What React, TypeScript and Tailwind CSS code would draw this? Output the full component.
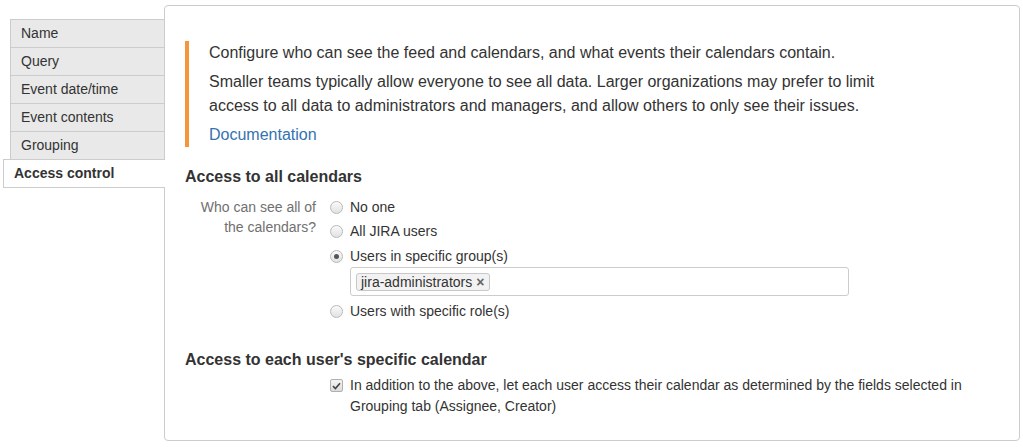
import React from "react";

const tabs = ["Name", "Query", "Event date/time", "Event contents", "Grouping"];

function Radio({ checked }: { checked?: boolean }) {
  return (
    <span className="flex h-[13px] w-[13px] shrink-0 items-center justify-center rounded-full border border-[#b9b9b9] bg-gradient-to-b from-[#fafafa] to-[#e2e2e2]">
      {checked && <span className="h-[5px] w-[5px] rounded-full bg-[#555]" />}
    </span>
  );
}

function Checkbox() {
  return (
    <span className="flex h-[13px] w-[13px] shrink-0 items-center justify-center rounded-[2px] border border-[#b0b0b0] bg-gradient-to-b from-[#f4f4f4] to-[#dcdcdc]">
      <svg width="9" height="8" viewBox="0 0 9 8">
        <path d="M1 4.2 L3.4 6.5 L8 1.2" fill="none" stroke="#444" strokeWidth="1.6" />
      </svg>
    </span>
  );
}

export default function App() {
  return (
    <div
      className="flex w-[1023px] h-[448px] bg-white text-[#333]"
      style={{ fontFamily: '"Liberation Sans", Arial, sans-serif' }}
    >
      <div className="ml-[10px] mt-[19px] w-[154px] shrink-0 text-[14px]">
        {tabs.map((t) => (
          <div
            key={t}
            className="h-[28px] border-l border-t border-[#ccc] bg-[#e9e9e9] pl-[10px] leading-[27px]"
          >
            {t}
          </div>
        ))}
        <div className="relative z-10 -ml-[7px] -mr-px h-[29px] border-y border-l border-[#ccc] bg-white pl-[10px] font-bold leading-[27px]">
          Access control
        </div>
      </div>
      <div className="mt-[5px] mb-[7px] w-[856px] shrink-0 rounded-[4px] border border-[#ccc] bg-white px-[20px] pt-[35px]">
        <div className="border-l-4 border-[#f6963c] pl-[20px] text-[16px] leading-[24px]">
          <p>Configure who can see the feed and calendars, and what events their calendars contain.</p>
          <p className="mt-[5px]">
            Smaller teams typically allow everyone to see all data. Larger organizations may prefer to limit
            <br />
            access to all data to administrators and managers, and allow others to only see their issues.
          </p>
          <p className="mt-[5px] text-[#3572b0]">Documentation</p>
        </div>

        <h3 className="mt-[18px] text-[16px] font-bold leading-[24px]">Access to all calendars</h3>
        <div className="mt-[8px] flex text-[14px]">
          <div className="w-[131px] shrink-0 text-right leading-[20px] text-[#707070]">
            Who can see all of
            <br />
            the calendars?
          </div>
          <div className="ml-[14px] flex flex-1 flex-col">
            <label className="flex h-[20px] items-center gap-[7px]">
              <Radio />
              <span>No one</span>
            </label>
            <label className="mt-[4.5px] flex h-[20px] items-center gap-[7px]">
              <Radio />
              <span>All JIRA users</span>
            </label>
            <label className="mt-[4.5px] flex h-[20px] items-center gap-[7px]">
              <Radio checked />
              <span>Users in specific group(s)</span>
            </label>
            <div className="ml-[20px] mt-px flex h-[29px] w-[499px] items-center rounded-[3px] border border-[#ccc] px-[5px]">
              <span className="flex h-[18px] items-center gap-[4px] rounded-[3px] border border-[#c8c8c8] bg-[#f2f2f2] pl-[4px] pr-[5px] leading-[16px]">
                jira-administrators
                <span className="text-[14px] font-bold text-[#666]">×</span>
              </span>
            </div>
            <label className="mt-[5px] flex h-[20px] items-center gap-[7px]">
              <Radio />
              <span>Users with specific role(s)</span>
            </label>
          </div>
        </div>

        <h3 className="mt-[27px] text-[16px] font-bold leading-[24px]">Access to each user's specific calendar</h3>
        <div className="mt-[3px] flex text-[14px]">
          <div className="w-[131px] shrink-0" />
          <div className="ml-[14px] flex flex-1 gap-[7px]">
            <span className="mt-[4px]">
              <Checkbox />
            </span>
            <span className="leading-[21px]">
              In addition to the above, let each user access their calendar as determined by the fields selected in Grouping tab (Assignee, Creator)
            </span>
          </div>
        </div>
      </div>
    </div>
  );
}
